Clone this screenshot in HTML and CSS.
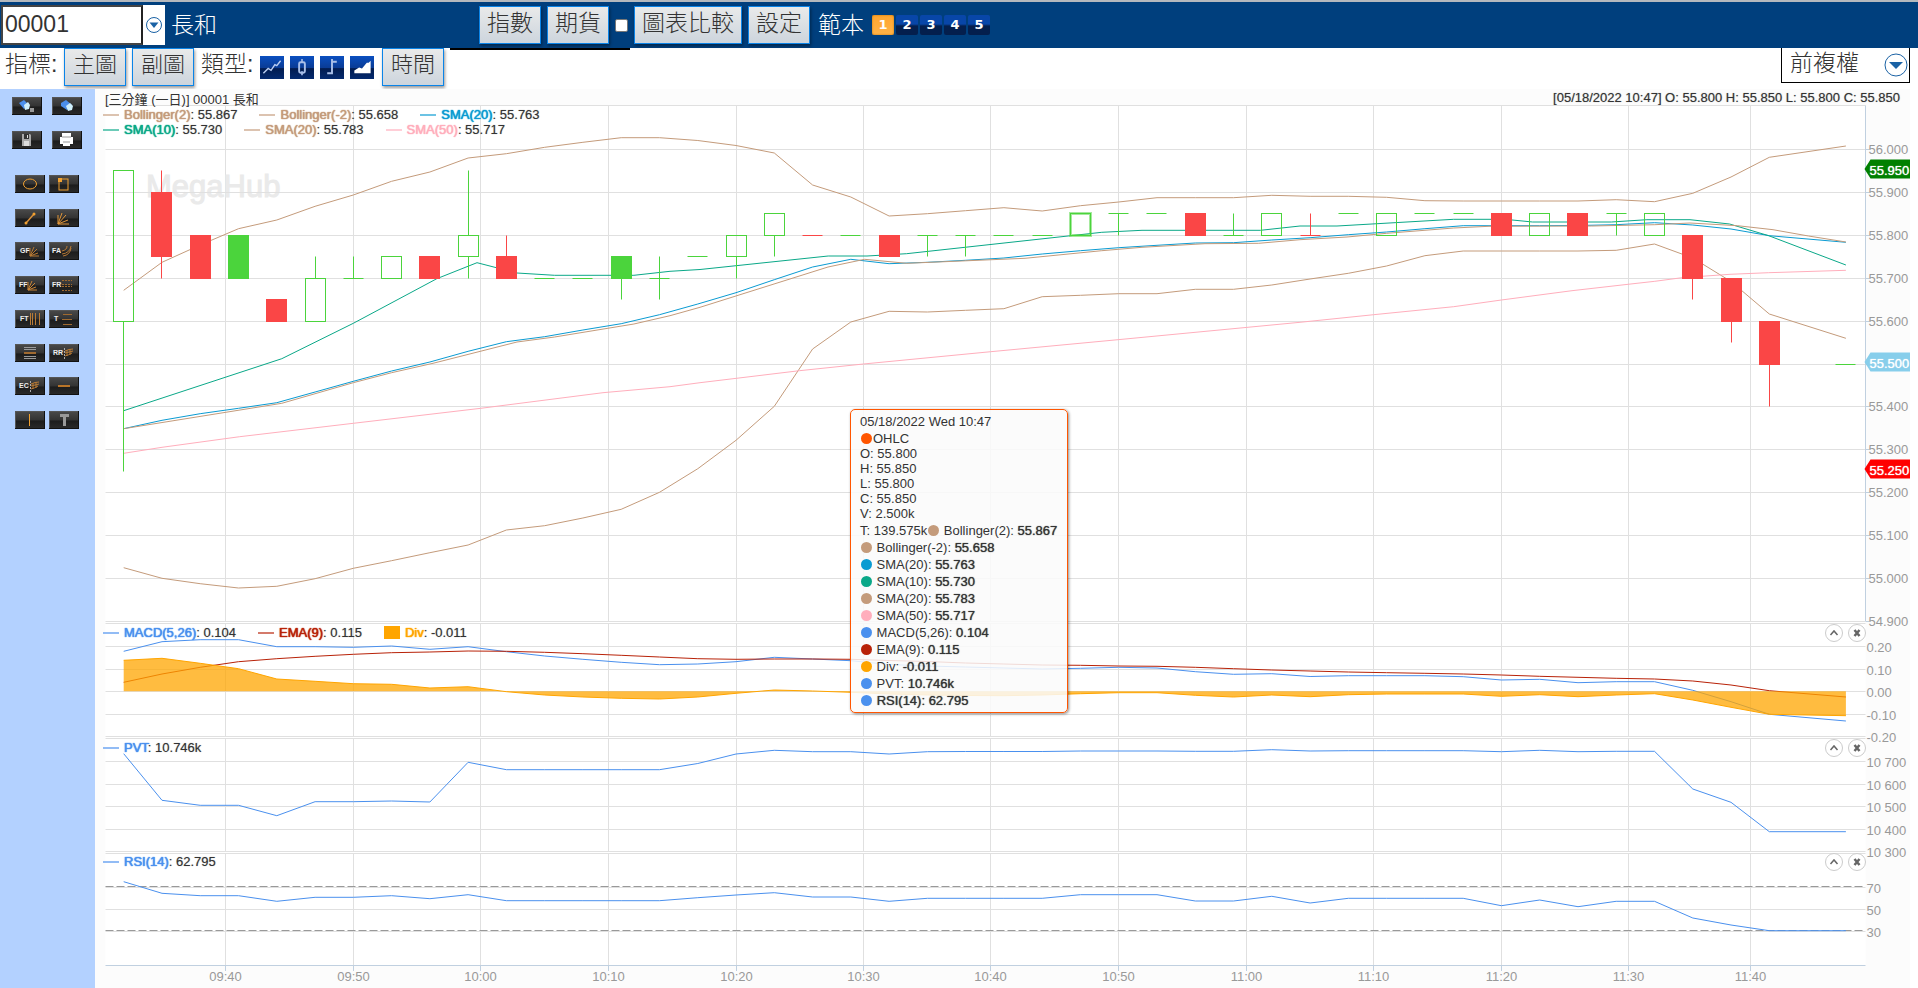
FILE: index.html
```
<!DOCTYPE html>
<html lang="zh-Hant">
<head>
<meta charset="utf-8">
<title>00001 長和</title>
<link rel="stylesheet" href="styles.css">
</head>
<body>
<header class="topbar">
  <div class="symbol">
    <input class="symbol-input" type="text" value="00001" aria-label="股票代號">
    <button class="symbol-drop" aria-label="選擇股票">
      <svg width="18" height="18" viewBox="0 0 18 18"><circle cx="9" cy="9" r="7.5" fill="#fff" stroke="#1a62a5"/><path d="M4.5 6.5h9L9 12z" fill="#1a62a5"/></svg>
    </button>
    <span class="symbol-name">長和</span>
  </div>
  <div class="actions">
    <button class="btn">指數</button>
    <button class="btn">期貨</button>
    <input class="compare-check" type="checkbox" aria-label="圖表比較">
    <button class="btn">圖表比較</button>
    <button class="btn">設定</button>
    <span class="tpl-label">範本</span>
    <div class="templates">
      <button class="tpl tpl-on">1</button><button class="tpl">2</button><button class="tpl">3</button><button class="tpl">4</button><button class="tpl">5</button>
    </div>
  </div>
  <span class="underline"></span>
</header>

<div class="toolbar">
  <span class="label">指標:</span>
  <button class="btn btn-l">主圖</button>
  <button class="btn btn-l">副圖</button>
  <span class="label label-type">類型:</span>
  <div class="types">
    <button class="type" aria-label="線圖"><svg viewBox="0 0 24 24"><path d="M3 18l5-5 3 2 4-6 2 1 4-5" fill="none" stroke="#b9cdf2" stroke-width="1.5"/></svg></button>
    <button class="type" aria-label="陰陽燭"><svg viewBox="0 0 24 24"><path d="M12 3v4M12 16v4" stroke="#8fa9dc" stroke-width="2"/><rect x="9" y="6.500" width="6" height="11" rx="1.500" fill="none" stroke="#a9bfe8" stroke-width="2"/></svg></button>
    <button class="type" aria-label="棒形圖"><svg viewBox="0 0 24 24"><path d="M12 3v16M12 6h5M7 18h5" fill="none" stroke="#a9bfe8" stroke-width="2"/></svg></button>
    <button class="type" aria-label="面積圖"><svg viewBox="0 0 24 24"><path d="M4 18v-3l5-3 3 1 5-6 2 0 2-2v13z" fill="#fff"/></svg></button>
  </div>
  <button class="btn btn-l">時間</button>
  <div class="adjust">
    <select class="adjust-select" aria-label="復權"><option>前複權</option></select>
    <svg class="adjust-arrow" width="24" height="24" viewBox="0 0 24 24"><circle cx="12" cy="12" r="11" fill="#fff" stroke="#1a62a5"/><path d="M5 9h14l-7 7z" fill="#1a62a5"/></svg>
  </div>
</div>

<main class="work">
  <nav class="tools">
    <div class="tool-grid tool-grid-top">
      <button class="tool" aria-label="橡皮擦"><svg viewBox="0 0 30 18"><path d="M7 6l5-3 5 5-5 4z" fill="#4b8fec"/><path d="M12 8l4-3 2 3-1 4-4 1z" fill="#cfeffb"/><rect x="18" y="11" width="4" height="4" fill="#999"/></svg></button>
      <button class="tool" aria-label="清除"><svg viewBox="0 0 30 18"><path d="M9 6l5-3 6 5-5 5-6-4z" fill="#4b8fec"/><path d="M14 9l4-3 3 3-1 4-4 1z" fill="#cfeffb"/></svg></button>
      <button class="tool" aria-label="儲存"><svg viewBox="0 0 30 18"><path d="M10 3h8l1 1v11h-9z" fill="#a9a9a9"/><path d="M12 3h5v5h-5z" fill="#333"/><path d="M15 4h1v3h-1zM12 10h5v5h-5z" fill="#ddd"/></svg></button>
      <button class="tool" aria-label="列印"><svg viewBox="0 0 30 18"><path d="M10 2h9v4h2v7h-3v2h-7v-2H8V6h2z" fill="#fff"/><path d="M10 6h9M11 11h7" stroke="#999"/></svg></button>
    </div>
    <div class="tool-grid tool-grid-draw">
      <button class="tool" aria-label="橢圓"><svg viewBox="0 0 30 18"><ellipse cx="15" cy="9" rx="6.500" ry="5" fill="none" stroke="#f0a030"/></svg></button>
      <button class="tool" aria-label="矩形"><svg viewBox="0 0 30 18"><rect x="10" y="4" width="9" height="11" fill="none" stroke="#f0a030"/><path d="M9 3h4v4H9z" fill="#f0a030"/></svg></button>
      <button class="tool" aria-label="線"><svg viewBox="0 0 30 18"><path d="M11 14l8-9" stroke="#d9903a" stroke-width="1.500"/><circle cx="11" cy="14" r="1.500" fill="#f0a030"/><circle cx="19" cy="5" r="1.500" fill="#f0a030"/></svg></button>
      <button class="tool" aria-label="角度線"><svg viewBox="0 0 30 18"><path d="M9 15h11M9 15l10-4M9 15l8-9M9 15l4-11M9 15V6" stroke="#e0963a" fill="none"/></svg></button>
      <button class="tool" aria-label="GF"><svg viewBox="0 0 30 18"><text x="5" y="11">GF</text><path d="M15 14h9M15 14l8-3M15 14l7-7M15 14l4-9M15 14V6" stroke="#b87a35" fill="none"/></svg></button>
      <button class="tool" aria-label="FA"><svg viewBox="0 0 30 18"><text x="3" y="11">FA</text><path d="M13 9q5-1 5-5M13 12q8-1 9-8M14 14q7-1 8-8" stroke="#b87a35" fill="none"/></svg></button>
      <button class="tool" aria-label="FF"><svg viewBox="0 0 30 18"><text x="4" y="11">FF</text><path d="M13 14h9M13 14l8-3M13 14l7-7M13 14l4-9M13 14V6" stroke="#c98538" fill="none"/></svg></button>
      <button class="tool" aria-label="FR"><svg viewBox="0 0 30 18"><text x="3" y="11">FR</text><path d="M13 4.500h10M13 8.500h10M13 10.500h10M13 14.500h10" stroke="#a06a30" stroke-dasharray="2 1"/></svg></button>
      <button class="tool" aria-label="FT"><svg viewBox="0 0 30 18"><text x="5" y="11">FT</text><path d="M15.500 3v12M17.500 3v12M20.500 3v12M24.500 3v12" stroke="#b87a35"/></svg></button>
      <button class="tool" aria-label="T線"><svg viewBox="0 0 30 18"><text x="5" y="11">T</text><path d="M14 4.500h9M13 9.500h10M14 14.500h9" stroke="#a06a30"/></svg></button>
      <button class="tool" aria-label="通道"><svg viewBox="0 0 30 18"><path d="M9 3.500h12M9 5.500h12M9 12.500h12M9 14.500h12" stroke="#999"/><path d="M9 9h12" stroke="#a06a30" stroke-width="2"/></svg></button>
      <button class="tool" aria-label="RR"><svg viewBox="0 0 30 18"><text x="4" y="11">RR</text><path d="M15.500 4v11" stroke="#aaa" stroke-dasharray="2 1"/><path d="M16 7q4-2 8-2M16 9q4-1 8-2M16 12q4-1 7-3M18 6v6M21 5v6" stroke="#b87a35" fill="none"/></svg></button>
      <button class="tool" aria-label="EC"><svg viewBox="0 0 30 18"><text x="4" y="11">EC</text><path d="M15.500 4v11" stroke="#aaa" stroke-dasharray="2 1"/><path d="M16 7q4-2 8-2M16 9q4-1 8-2M16 12q4-1 7-3M18 6v6M21 5v6" stroke="#b87a35" fill="none"/></svg></button>
      <button class="tool" aria-label="水平線"><svg viewBox="0 0 30 18"><path d="M9 9h12" stroke="#b87428" stroke-width="2"/></svg></button>
      <button class="tool" aria-label="垂直線"><svg viewBox="0 0 30 18"><path d="M14.500 3v12" stroke="#f0a030"/></svg></button>
      <button class="tool" aria-label="文字"><svg viewBox="0 0 30 18"><path d="M11 3h9v3h-3v9h-3V6h-3z" fill="#999"/></svg></button>
    </div>
  </nav>

  <section class="chart">
    <svg class="plot" id="plot"></svg>
    <div class="pane pane-title">
      <span>[三分鐘 (一日)] 00001 長和</span>
      <span class="ohlc">[05/18/2022 10:47] O: 55.800 H: 55.850 L: 55.800 C: 55.850</span>
    </div>
    <div class="pane pane-main">
      <ul class="legend">
        <li class="tan"><i></i><span><b>Bollinger(2)</b>: 55.867</span></li>
        <li class="tan"><i></i><span><b>Bollinger(-2)</b>: 55.658</span></li>
        <li class="blue"><i></i><span><b>SMA(20)</b>: 55.763</span></li>
      </ul>
      <ul class="legend">
        <li class="green"><i></i><span><b>SMA(10)</b>: 55.730</span></li>
        <li class="tan"><i></i><span><b>SMA(20)</b>: 55.783</span></li>
        <li class="pink"><i></i><span><b>SMA(50)</b>: 55.717</span></li>
      </ul>
    </div>
    <div class="pane pane-macd">
      <ul class="legend">
        <li class="sky"><i></i><span><b>MACD(5,26)</b>: 0.104</span></li>
        <li class="red"><i></i><span><b>EMA(9)</b>: 0.115</span></li>
        <li class="orange"><i></i><span><b>Div</b>: -0.011</span></li>
      </ul>
      <div class="pane-ctl"><button class="ctl" aria-label="上移"><svg viewBox="1 1 16 16"><path d="M5.500 11L9 7l3.500 4"/></svg></button><button class="ctl" aria-label="關閉"><svg viewBox="1 1 16 16"><path class="x" d="M6.500 6l5 6M11.500 6l-5 6"/></svg></button></div>
    </div>
    <div class="pane pane-pvt">
      <ul class="legend"><li class="sky"><i></i><span><b>PVT</b>: 10.746k</span></li></ul>
      <div class="pane-ctl"><button class="ctl" aria-label="上移"><svg viewBox="1 1 16 16"><path d="M5.500 11L9 7l3.500 4"/></svg></button><button class="ctl" aria-label="關閉"><svg viewBox="1 1 16 16"><path class="x" d="M6.500 6l5 6M11.500 6l-5 6"/></svg></button></div>
    </div>
    <div class="pane pane-rsi">
      <ul class="legend"><li class="sky"><i></i><span><b>RSI(14)</b>: 62.795</span></li></ul>
      <div class="pane-ctl"><button class="ctl" aria-label="上移"><svg viewBox="1 1 16 16"><path d="M5.500 11L9 7l3.500 4"/></svg></button><button class="ctl" aria-label="關閉"><svg viewBox="1 1 16 16"><path class="x" d="M6.500 6l5 6M11.500 6l-5 6"/></svg></button></div>
    </div>
    <div class="tip">
      <p>05/18/2022 Wed 10:47</p>
      <p><i class="dot ohlc-dot"></i>OHLC</p>
      <p class="tight">O: 55.800</p>
      <p class="tight">H: 55.850</p>
      <p class="tight">L: 55.800</p>
      <p class="tight">C: 55.850</p>
      <p class="tight">V: 2.500k</p>
      <p>T: 139.575k<i class="dot tan"></i> Bollinger(2): <b>55.867</b></p>
      <p><i class="dot tan"></i> Bollinger(-2): <b>55.658</b></p>
      <p><i class="dot blue"></i> SMA(20): <b>55.763</b></p>
      <p><i class="dot green"></i> SMA(10): <b>55.730</b></p>
      <p><i class="dot tan"></i> SMA(20): <b>55.783</b></p>
      <p><i class="dot pink"></i> SMA(50): <b>55.717</b></p>
      <p><i class="dot sky"></i> MACD(5,26): <b>0.104</b></p>
      <p><i class="dot red"></i> EMA(9): <b>0.115</b></p>
      <p><i class="dot orange"></i> Div: <b>-0.011</b></p>
      <p><i class="dot sky"></i> PVT: <b>10.746k</b></p>
      <p><i class="dot sky"></i> <b>RSI(14): 62.795</b></p>
    </div>
  </section>
</main>
<script src="chart.js"></script>
</body>
</html>
```
FILE: styles.css
```
* { box-sizing: border-box; }
html, body { height: 100%; }
body {
  margin: 0;
  display: flex;
  flex-direction: column;
  background: #fff;
  color: #333;
  font-family: "Liberation Sans", "Noto Sans CJK TC", sans-serif;
  font-size: 13px;
  overflow: hidden;
}
button, input, select { font: inherit; color: inherit; margin: 0; }
button { padding: 0; border: 0; cursor: pointer; }
svg { display: block; }

.topbar {
  position: relative;
  flex: none;
  display: flex;
  height: 48px;
  border-top: 2px solid #b4b8bd;
  background: #003f7d;
}
.symbol { flex: none; width: 479px; display: flex; align-items: center; padding-left: 1px; }
.symbol-input {
  width: 142px;
  height: 40px;
  border: 2px solid #444;
  border-right-color: #222;
  background: #fff;
  padding: 0 0 2px 2px;
  font-size: 23px;
}
.symbol-drop { width: 22px; height: 40px; background: #fff; display: grid; place-items: center; }
.symbol-name { padding: 0 0 4px 6px; color: #fff; font-size: 23px; font-weight: 300; }

.actions { display: flex; align-items: center; gap: 6px; }
.btn {
  height: 38px;
  padding: 0 7px 5px;
  border: 1px solid #0a84e8;
  background: linear-gradient(#e9eaea, #cdd5dd);
  box-shadow: 1px 2px 3px rgba(0, 0, 0, .4);
  color: #333;
  font-size: 23px;
  font-weight: 300;
  line-height: 30px;
}
.btn-l { padding: 0 8px 5px; font-size: 22px; }
.compare-check {
  appearance: none;
  width: 13px;
  height: 13px;
  border: 1px solid #777;
  border-radius: 2px;
  background: #fff;
}
.tpl-label { padding: 0 2px 4px; color: #fff; font-size: 23px; font-weight: 300; }
.templates { display: flex; gap: 2px; }
.tpl {
  width: 22px;
  height: 20px;
  border-radius: 2px;
  background: linear-gradient(#0846a8 45%, #041f4d 55%);
  color: #fff;
  font-family: "DejaVu Sans", sans-serif;
  font-size: 13px;
  font-weight: bold;
  line-height: 20px;
}
.tpl-on { background: linear-gradient(#ffa52e, #ffb347); box-shadow: inset 0 0 2px #b86a00; }
.underline { position: absolute; left: 450px; top: 46px; width: 180px; height: 2px; background: #000; }

.toolbar { flex: none; display: flex; align-items: flex-start; gap: 6px; height: 41px; padding: 0 8px 0 5px; }
.label { width: 53px; font-size: 23px; font-weight: 300; line-height: 32px; }
.label-type { margin-left: 1px; }
.types { display: flex; gap: 6px; margin: 8px 2px 0 0; }
.type { width: 24px; height: 23px; background: linear-gradient(#0a4fc0, #0a3c96 50%, #021c50 55%, #042a70); }
.type svg { width: 24px; height: 23px; }
.adjust { position: relative; margin-left: auto; width: 129px; height: 35px; }
.adjust-select {
  appearance: none;
  width: 100%;
  height: 100%;
  border: 1px solid #000;
  border-top: 0;
  border-radius: 0;
  background: #fff;
  padding: 0 0 5px 8px;
  font-size: 23px;
  font-weight: 300;
}
.adjust-arrow { position: absolute; right: 2px; top: 5px; pointer-events: none; }

.work { flex: 1; min-height: 0; display: flex; padding-right: 8px; }
.tools { width: 95px; flex: none; background: #b3d1ff; padding-top: 8px; }
.tool-grid { display: grid; grid-template-columns: 30px 30px; gap: 16px 4px; padding-left: 15px; }
.tool-grid-top { column-gap: 10px; padding-left: 12px; margin-bottom: 26px; }
.tool-grid-draw { height: 254px; row-gap: 0; align-content: space-between; }
.tool {
  width: 30px;
  height: 18px;
  background: linear-gradient(#4a4a4a, #333 50%, #1c1c1c 55%, #2a2a2a);
  box-shadow: inset -1px -1px 0 #111, inset 1px 1px 0 #555;
}
.tool svg { width: 30px; height: 18px; }
.tool text { font: bold 7px "Liberation Sans", sans-serif; fill: #eee; }

.chart {
  position: relative;
  flex: 1;
  min-width: 0;
  display: grid;
  grid-template-columns: minmax(0, 1fr);
  grid-template-rows: minmax(0, 17fr) minmax(0, 518fr) minmax(0, 115fr) minmax(0, 114fr) minmax(0, 113fr) minmax(0, 22fr);
  background: #fcfcfc;
}
.plot { grid-area: 1 / 1 / -1 / -1; width: 100%; height: 100%; }
.pane { grid-column: 1; display: flex; justify-content: space-between; align-items: flex-start; padding: 0 44px 0 8px; }
.pane-title { grid-row: 1; padding: 0 10px; line-height: 22px; }
.ohlc { text-shadow: 0 0 1px #999; line-height: 17px; }
.pane-main { grid-row: 2; flex-direction: column; justify-content: flex-start; padding-top: 1px; }
.pane-macd { grid-row: 3; }
.pane-pvt { grid-row: 4; }
.pane-rsi { grid-row: 5; }
.legend { margin: 0; padding: 0; list-style: none; display: flex; gap: 22px; line-height: 15px; }
.pane-macd .legend, .pane-pvt .legend, .pane-rsi .legend { line-height: 17px; }
.legend li { display: flex; align-items: center; gap: 5px; }
.legend i { width: 16px; height: 2px; background: currentColor; opacity: .6; }
.legend span { color: #333; text-shadow: 0 0 1px #999; }
.legend b { font-weight: normal; text-shadow: 0 0 1px currentColor, 0 0 1px currentColor; }
.legend .tan b, .tan { color: #c49b7b; }
.legend .blue b, .blue { color: #0a9bd2; }
.legend .green b, .green { color: #0aa888; }
.legend .pink b, .pink { color: #ffaebc; }
.legend .sky b, .sky { color: #4a90ee; }
.legend .red b, .red { color: #b82208; }
.legend .orange b, .orange { color: #ffa500; }
.legend .orange i { height: 13px; opacity: 1; }
.pane-ctl { display: flex; gap: 5px; }
.ctl { width: 18px; height: 18px; background: none; }
.ctl svg { width: 18px; height: 18px; fill: none; stroke: #666; stroke-width: 1.5; border: 1px solid #ccc; border-radius: 50%; background: #fff; }
.ctl .x { stroke-width: 2.5; }

.tip {
  position: absolute;
  left: 755px;
  top: 320px;
  padding: 3px 10px 3px 9px;
  border: 1px solid #ff5500;
  border-radius: 5px;
  background: rgba(250, 250, 250, .85);
  box-shadow: 1px 1px 3px rgba(0, 0, 0, .45);
  white-space: nowrap;
}
.tip p { margin: 0; line-height: 17px; height: 17px; }
.tip .tight { line-height: 14px; height: 15px; }
.tip b { font-weight: normal; text-shadow: 0 0 1px #333; }
.dot { display: inline-block; width: 11px; height: 11px; margin: 0 1px; border-radius: 50%; background: currentColor; vertical-align: -1px; }
.ohlc-dot { color: #ff5500; }

.plot text { font-family: "Liberation Sans", sans-serif; font-size: 13px; fill: #999; }
.plot .mark { font-size: 31px; fill: #eaeaea; stroke: #eaeaea; }
.plot .tag-text { fill: #fff; text-shadow: 0 0 1px #fff; }
```
FILE: chart.js
```
(function () {
  // Coordinates are on a 1815 x 899 base grid with its origin at (95, 89); they scale with the element.
  var OX = 95, OY = 89, BW = 1815, BH = 899;
  var X0 = 123.7, STEP = 38.27;
  var LEFT = 105, RIGHT = 1865;
  var COLOR = { tan: '#c49b7b', blue: '#0a9bd2', green: '#0aa888', pink: '#ffaebc', sky: '#4a90ee', red: '#b82208', orange: '#ffa500' };

  // Slot 44 has no trade, so the last value sits on slot 45.
  function slots(values) {
    return values.map(function (v, i) { return [X0 + STEP * (i === 44 ? 45 : i), v]; });
  }
  var upper = slots([290.3,262.3,245,228.7,220,206.3,195,181.3,172,158,153.7,147.3,142.3,137.7,137.7,140.5,145.5,153,185,197,216,213.7,210.7,207.7,211,205.7,202,197.7,197.7,197.7,195.3,196.3,196.3,197.3,200.7,201,201,201,201,199.7,201.7,193.3,177,157.3,146]);
  var lower = slots([567.7,578.3,583.7,588,586.3,578.7,568.3,560.7,552.7,545,530,525.7,518,509.3,492.3,468.7,440.3,406.3,349,322,311.3,312,310.3,308.7,296.7,295.3,293.7,293.7,289.3,289.3,285,279,273.3,266,255.7,251,251,251,251,250.3,244,258,281.5,314,338.3]);
  var smaBlue = slots([428.7,420.3,413.7,408.3,402.7,392,381.3,371,362,351.3,341.7,336.7,330,323.7,314.7,304,292.7,279.7,267,259.3,263.7,262.3,260.3,258,254,250.7,247.7,245.3,243,242.7,240,237.7,234.7,232,228.7,225.7,225.7,225.7,225.5,224.7,222.7,225,229,235.7,242.3]);
  var sma10 = [[123.7,410.7],[281.8,358.7],[353.3,323.3],[436.8,278.7],[477,262.7],[517,273],[554.6,275.3],[633.9,275.3],[670,271.3],[700,269.5],[828.2,256],[867,256],[906.6,253.7],[1101.8,232.3],[1142,230.3],[1260.6,230.3],[1300,226],[1337,226],[1453.7,219.3],[1505,219.3],[1532.6,222],[1611.4,222],[1646.9,219.7],[1690,219.7],[1729.6,224],[1768.7,235.7],[1845.9,265]];
  var smaTan = [[123.7,428.7],[281.8,403.3],[353.3,382.7],[391.6,372.7],[433,363.3],[517,342],[554.6,337],[633.9,324],[670,315.7],[700,307.3],[828,267],[864.6,259.3],[906.6,263.3],[1025,258.3],[1101.8,250.7],[1142,247.3],[1205,243.7],[1258.7,243.3],[1300,239.7],[1347,237],[1386.7,233.3],[1453.7,228],[1489,226.3],[1591.7,226],[1654.8,224.7],[1690,223],[1737.5,225.7],[1773,229.7],[1808.5,236],[1845.9,242]];
  var sma50 = [[123.7,453.3],[162,447.3],[239.7,436.7],[353.3,423.3],[480.8,408.3],[603,392.7],[670,386.7],[700,382.7],[799.5,370.7],[863.4,364],[990.8,351.7],[1118,339.7],[1300,322.3],[1373.7,314.7],[1453.7,306.7],[1501.4,300],[1572,290.7],[1628,284.3],[1654.8,281.3],[1682,277.7],[1730,274.3],[1768.7,272.7],[1845.9,270.3]];
  var macd = slots([651.3,641.7,639.7,639.7,646.7,646.7,647.3,646,649.3,646.7,651.7,656,659.3,662.3,664.7,664,661.7,657.3,659,660.7,664.5,666,667,668,669,668.3,667.3,668,671.7,674.3,673.7,676.5,675.7,675.7,675.7,676.7,680,679.3,682.7,681.7,681.7,690.3,701.7,714.3,721]);
  var ema = slots([682.3,674,667.3,661.7,658.7,656.3,654.3,652.7,652,651,651.3,652.3,653.7,655.3,657,658.7,659.3,659,659,659.3,660.5,661.5,663,664,665,665.3,666,666.3,667.3,668.7,670,671,672,672.7,673.3,674,675,676.3,677.3,678.3,679,681,685,690.7,697]);
  var div = slots([660.3,658.3,663.3,668.7,679,681.3,683.7,684.3,688,686.7,691.7,695,697,698.3,699,697,693.3,690,691,692.3,694,695,695.5,695.7,695,693.7,692.7,692.7,695.3,697,695,696.7,694.7,694,694,694,696.3,694.7,696.7,695,693.7,700,707.3,714.3,715.7]);
  var pvt = slots([753.7,800.3,805.3,805.3,815.7,801.7,801.7,801,802,762.3,769.7,769.7,769.7,769.7,769.7,763.5,754,750.3,751.7,751.7,754,751.7,751.5,751.5,751.5,751,751,751,751.3,751.3,749.7,751,750.7,750.7,750.7,750.7,751.7,750.3,751.7,751.3,751.3,789,802.3,831.7,831.7]);
  var rsi = slots([881.7,893.3,895.7,895.7,901.3,897.3,897.3,895.7,898.7,894.7,900.7,900.7,900.7,900.7,900.7,897.7,895,892.7,897,897,901.3,898.3,898.3,898.3,898.3,894.7,894.7,894.7,901,901,896.3,903,898.3,898.3,898.3,898.3,905.7,900,906.7,901.3,901.3,918,925,930.7,930.7]);

  // slot, kind (h hollow up, g solid up, r down, s selected), top, bottom, high, low
  var candles = [
    [0,'h',55.95,55.6,55.95,55.25],[1,'r',55.9,55.75,55.95,55.7],[2,'r',55.8,55.7],[3,'g',55.8,55.7],[4,'r',55.65,55.6],
    [5,'h',55.7,55.6,55.75,55.6],[6,'h',55.7,55.7,55.75,55.7],[7,'h',55.75,55.7],[8,'r',55.75,55.7],[9,'h',55.8,55.75,55.95,55.7],
    [10,'r',55.75,55.7,55.8,55.7],[11,'h',55.7,55.7],[12,'h',55.7,55.7],[13,'g',55.75,55.7,55.75,55.65],[14,'h',55.7,55.7,55.75,55.65],
    [15,'h',55.75,55.75],[16,'h',55.8,55.75,55.8,55.7],[17,'h',55.85,55.8,55.85,55.75],[18,'r',55.8,55.8],[19,'h',55.8,55.8],
    [20,'r',55.8,55.75],[21,'h',55.8,55.8,55.8,55.75],[22,'h',55.8,55.8,55.8,55.75],[23,'h',55.8,55.8],[24,'h',55.8,55.8],
    [25,'s',55.85,55.8],[26,'h',55.85,55.85,55.85,55.8],[27,'h',55.85,55.85],[28,'r',55.85,55.8],[29,'h',55.8,55.8,55.85,55.8],
    [30,'h',55.85,55.8],[31,'r',55.8,55.8,55.85,55.8],[32,'h',55.85,55.85],[33,'h',55.85,55.8],[34,'h',55.85,55.85],
    [35,'h',55.85,55.85],[36,'r',55.85,55.8],[37,'h',55.85,55.8],[38,'r',55.85,55.8],[39,'h',55.85,55.85,55.85,55.8],
    [40,'h',55.85,55.8],[41,'r',55.8,55.7,55.8,55.65],[42,'r',55.7,55.6,55.7,55.55],[43,'r',55.6,55.5,55.6,55.4],[45,'h',55.5,55.5]
  ];
  var times = [[2.66,'09:40'],[6,'09:50'],[9.33,'10:00'],[12.67,'10:10'],[16,'10:20'],[19.33,'10:30'],[22.65,'10:40'],[26,'10:50'],[29.33,'11:00'],[32.66,'11:10'],[36,'11:20'],[39.33,'11:30'],[42.5,'11:40']];
  var panes = [[105, 621], [623, 736], [738, 851], [853, 965]];
  var small = [[646,'0.20'],[669,'0.10'],[691,'0.00'],[714,'-0.10'],[736,'-0.20'],[761,'10 700'],[784,'10 600'],[806,'10 500'],[829,'10 400'],[851,'10 300'],[887,'70'],[909,'50'],[931,'30']];
  var tags = [[169,'55.950','#008000'],[362,'55.500','#87ceeb'],[469,'55.250','#ff0000']];

  var svg = document.getElementById('plot');
  function draw() {
    var box = svg.getBoundingClientRect(), W = box.width, H = box.height, out = [];
    function x(v) { return (v - OX) * W / BW; }
    function y(v) { return (v - OY) * H / BH; }
    function snap(v) { return Math.floor(v) + 0.5; }
    function price(p) { return 149.5 + (56 - p) * 429; }
    function line(x1, y1, x2, y2, c, extra) {
      out.push('<line x1="' + x1 + '" y1="' + y1 + '" x2="' + x2 + '" y2="' + y2 + '" stroke="' + c + '" ' + (extra || '') + '/>');
    }
    function text(tx, ty, s, extra) { out.push('<text x="' + tx + '" y="' + ty + '" ' + (extra || '') + '>' + s + '</text>'); }
    function pts(a) { return a.map(function (p) { return x(p[0]).toFixed(1) + ',' + y(p[1]).toFixed(1); }).join(' '); }
    function series(a, c) { out.push('<polyline points="' + pts(a) + '" fill="none" stroke="' + c + '"/>'); }

    var L = snap(x(LEFT)), R = snap(x(RIGHT)), grid = '#e0e0e0', i;
    out.push('<rect x="' + L + '" y="' + y(106) + '" width="' + (R - L) + '" height="' + (y(965) - y(106)) + '" fill="#fff"/>');
    panes.forEach(function (p) {
      line(L, snap(y(p[0])), R, snap(y(p[0])), grid);
      times.forEach(function (t) { var tx = snap(x(X0 + STEP * t[0])); line(tx, y(p[0]), tx, y(p[1]), grid); });
    });
    text(x(146), y(197), 'MegaHub', 'class="mark"');
    for (i = 0; i <= 11; i++) {
      var gp = 56 - i / 10, gy = snap(y(price(gp)));
      line(L, gy, R, gy, grid);
      line(R, gy, R + 4, gy, '#c0d0e0');
      text(R + 3, gy + 4, gp.toFixed(3));
    }
    small.forEach(function (s) {
      var sy = snap(y(s[0]));
      line(L, sy, R, sy, grid);
      text(R + 1, sy + 5, s[1]);
    });
    line(R, snap(y(105)), R, y(621), '#c0d0e0');
    line(L, snap(y(965)), R, snap(y(965)), '#c0d0e0');
    times.forEach(function (t) {
      var tx = snap(x(X0 + STEP * t[0]));
      line(tx, y(966), tx, y(971), '#c0d0e0');
      text(tx, y(981), t[1], 'text-anchor="middle"');
    });
    [886, 930].forEach(function (d) { line(L, snap(y(d)), R, snap(y(d)), '#999', 'stroke-dasharray="8 3"'); });

    series(upper, COLOR.tan);
    series(lower, COLOR.tan);
    series(smaBlue, COLOR.blue);
    series(sma10, COLOR.green);
    series(smaTan, COLOR.tan);
    series(sma50, COLOR.pink);
    candles.forEach(function (c) {
      var cx = snap(x(X0 + STEP * c[0])), t = snap(y(price(c[2]))), b = snap(y(price(c[3])));
      var col = c[1] === 'r' ? '#fa4646' : '#4bd43c';
      var fill = c[1] === 'r' || c[1] === 'g' ? col : 'none';
      if (c[4] > c[2]) line(cx, snap(y(price(c[4]))), cx, t, col);
      if (c[5] < c[3]) line(cx, b, cx, snap(y(price(c[5]))), col);
      if (t === b) { line(cx - 10, t, cx + 10, t, col); return; }
      if (c[1] === 's') out.push('<rect x="' + (cx - 10) + '" y="' + t + '" width="20" height="' + (b - t) + '" fill="none" stroke="' + col + '" stroke-width="3" opacity=".5"/>');
      out.push('<rect x="' + (cx - 10) + '" y="' + t + '" width="20" height="' + (b - t) + '" fill="' + fill + '" stroke="' + col + '"/>');
    });

    series(macd, COLOR.sky);
    series(ema, COLOR.red);
    var base = 691.3;
    out.push('<polygon points="' + pts([[X0, base]].concat(div, [[X0 + STEP * 45, base]])) + '" fill="' + COLOR.orange + '" opacity=".75"/>');
    series(div, COLOR.orange);
    series(pvt, COLOR.sky);
    series(rsi, COLOR.sky);

    tags.forEach(function (t) {
      var ty = y(t[0]);
      out.push('<path d="M' + (R - 1) + ' ' + ty + 'l6 -9.500H' + W + 'v19H' + (R + 5) + 'z" fill="' + t[2] + '"/>');
      text(R + 4, ty + 6, t[1], 'class="tag-text"');
    });
    svg.innerHTML = out.join('');
  }
  draw();
  window.addEventListener('resize', draw);
})();
```
